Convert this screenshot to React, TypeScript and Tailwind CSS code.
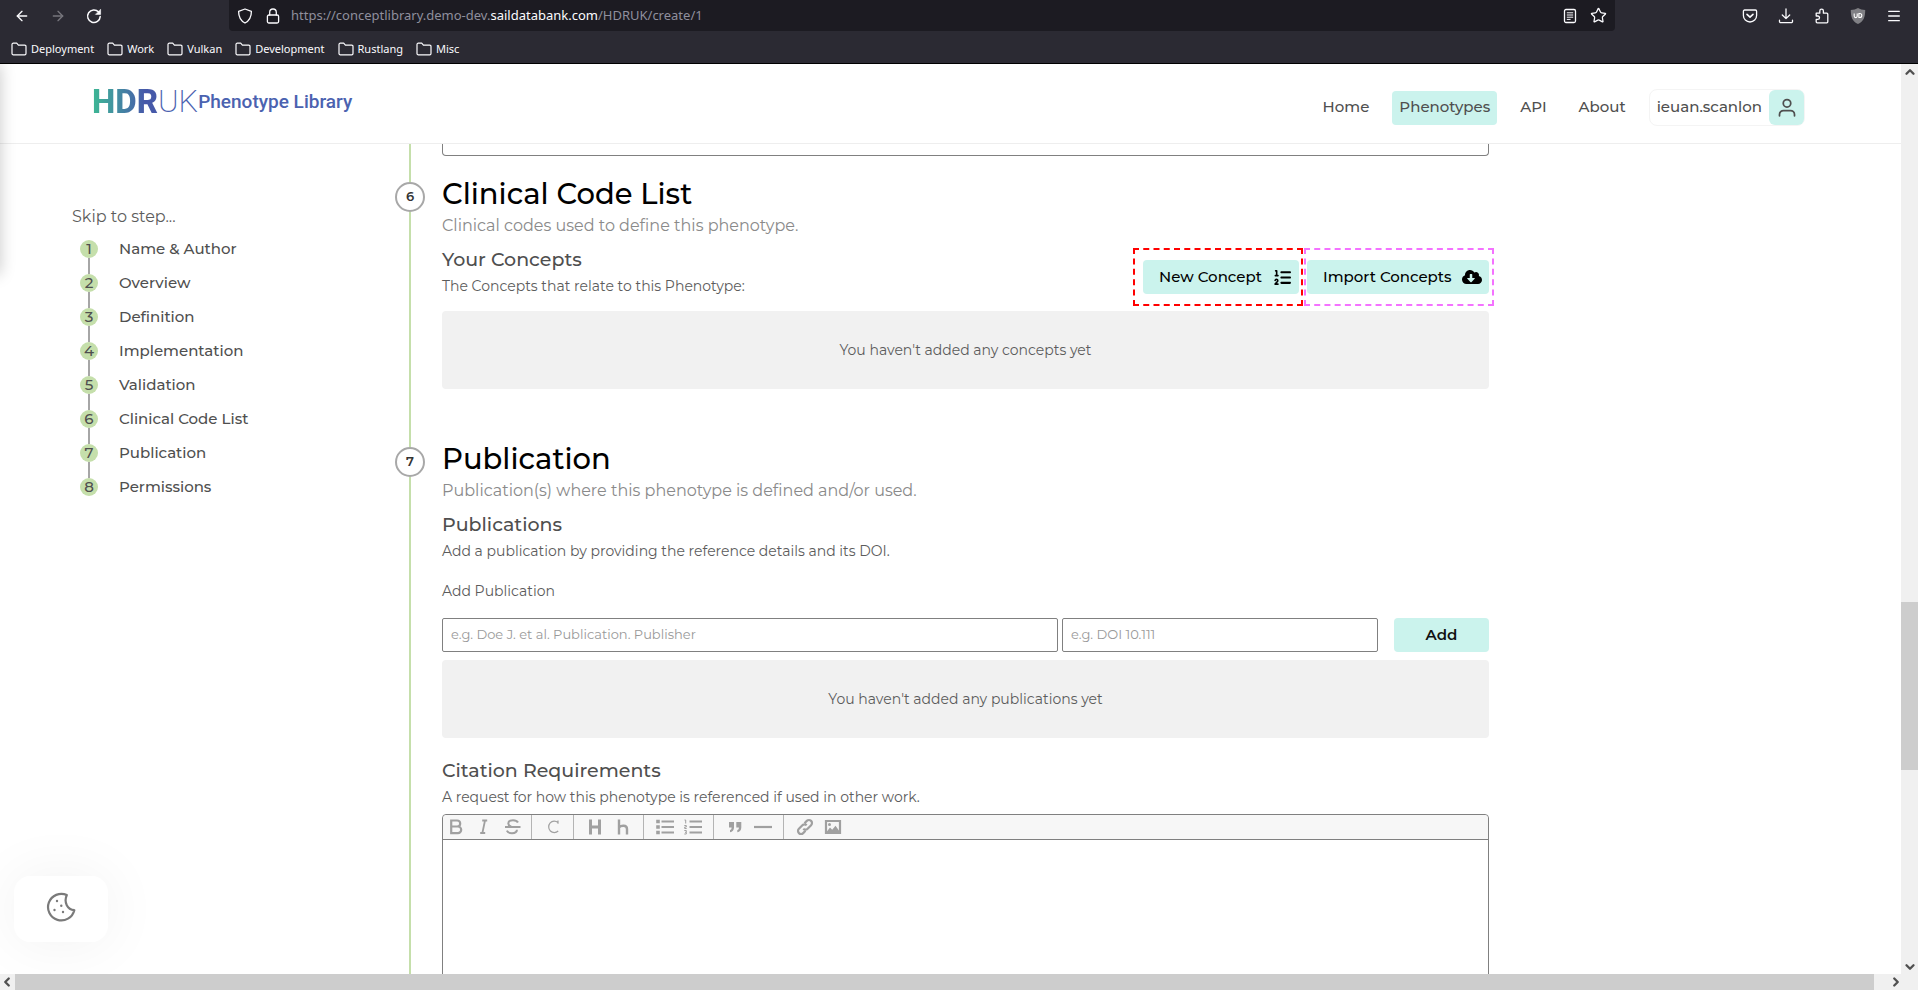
import React from "react";
import {
  ArrowLeft,
  ArrowRight,
  ChevronDown,
  ChevronLeft,
  ChevronRight,
  ChevronUp,
  Menu,
  Star,
} from "lucide-react";
import { FaListOl } from "react-icons/fa6";
import { FaCloudDownloadAlt } from "react-icons/fa";

const bookmarks = ["Deployment", "Work", "Vulkan", "Development", "Rustlang", "Misc"];

const steps = [
  "Name & Author",
  "Overview",
  "Definition",
  "Implementation",
  "Validation",
  "Clinical Code List",
  "Publication",
  "Permissions",
];

type IconProps = { children: React.ReactNode; size?: number; width?: number };

function Glyph({ children, size = 16, width = 1.3 }: IconProps) {
  return (
    <svg
      width={size}
      height={size}
      viewBox="0 0 16 16"
      fill="none"
      stroke="currentColor"
      strokeWidth={width}
      strokeLinecap="round"
      strokeLinejoin="round"
      aria-hidden="true"
    >
      {children}
    </svg>
  );
}

function BrowserChrome() {
  return (
    <div className="shrink-0 border-b border-black bg-[#2b2a33] font-['Noto_Sans',sans-serif] text-[#fbfbfe]">
      <div className="flex h-[31px] items-center">
        <div className="flex w-[229px] shrink-0 items-center gap-5 pl-[14px]">
          <button aria-label="Back"><ArrowLeft size={16} strokeWidth={2} /></button>
          <button aria-label="Forward" className="text-[#77767d]"><ArrowRight size={16} strokeWidth={2} /></button>
          <button aria-label="Reload">
            <Glyph width={1.5}>
              <path d="M14.2 8.6A6.3 6.3 0 1 1 12.6 4" />
              <path d="M14.6 1.6v4.8H9.8z" fill="currentColor" strokeWidth={0.6} />
            </Glyph>
          </button>
        </div>
        <div className="flex h-[31px] min-w-0 flex-1 items-center rounded-b bg-[#1c1b22] pr-2 pl-2">
          <Glyph>
            <path d="M8 1 14.4 3.4c0 5-1.600 9-6.400 11.600C3.200 12.400 1.600 8.400 1.600 3.400z" />
          </Glyph>
          <span className="ml-3">
            <Glyph>
              <rect x="2.400" y="7" width="11.200" height="8" rx="1.500" />
              <path d="M4.700 7V4.300a3.300 3.300 0 0 1 6.600 0V7" />
            </Glyph>
          </span>
          <span className="ml-[10px] flex-1 truncate text-[13px] text-[#8f8f9d]">
            https://conceptlibrary.demo-dev.<span className="text-[#fbfbfe]">saildatabank.com</span>/HDRUK/create/1
          </span>
          <button aria-label="Reader view" className="mr-3">
            <Glyph>
              <rect x="2.500" y="1.500" width="11" height="13" rx="1.500" />
              <path d="M5.200 4.800h5.600M5.200 7h5.600M5.200 9.200h5.600M5.200 11.400h3" strokeWidth={1} />
            </Glyph>
          </button>
          <button aria-label="Bookmark this page"><Star size={17} strokeWidth={1.800} /></button>
        </div>
        <div className="flex w-[303px] shrink-0 items-center justify-end gap-5 pr-4">
          <button aria-label="Save to Pocket">
            <Glyph>
              <path d="M2.600 2h10.800a1.200 1.200 0 0 1 1.200 1.200V7.400a6.600 6.600 0 0 1-13.200 0V3.200A1.200 1.200 0 0 1 2.600 2z" />
              <path d="m5 6.400 3 2.800 3-2.800" strokeWidth={1.600} />
            </Glyph>
          </button>
          <button aria-label="Downloads">
            <Glyph>
              <path d="M8 1v9.500M4.300 7 8 10.600 11.700 7M1.500 12.200v1.300a1.200 1.200 0 0 0 1.200 1.200h10.600a1.200 1.200 0 0 0 1.200-1.200v-1.300" />
            </Glyph>
          </button>
          <button aria-label="Extensions">
            <Glyph>
              <path d="M2.200 5.200h3.600V3a1.800 1.800 0 0 1 3.600 0v2.200h3.400a1 1 0 0 1 1 1v7.600a1 1 0 0 1-1 1H3.200a1 1 0 0 1-1-1v-2.400h1.600a1.700 1.700 0 0 0 0-3.400H2.200z" />
            </Glyph>
          </button>
          <button aria-label="Blocker">
            <svg width="16" height="16" viewBox="0 0 16 16" aria-hidden="true">
              <path d="M8 0c2 1.300 4.500 1.900 7.200 1.900C15.200 9 13.700 13.200 8 16 2.300 13.200.8 9 .8 1.900 3.500 1.900 6 1.300 8 0z" fill="#808085" />
              <path d="M4.200 5.500v2.600a1.500 1.500 0 0 0 3 0V5.500M8.900 5.500v4h.9a2 2 0 0 0 0-4z" fill="none" stroke="#fff" strokeWidth="1.100" />
            </svg>
          </button>
          <button aria-label="Menu"><Menu size={16} strokeWidth={1.900} /></button>
        </div>
      </div>
      <div className="flex h-8 items-center gap-[13px] pt-1 pl-[11px] text-[11px]">
        {bookmarks.map((name) => (
          <a key={name} href="#" className="flex items-center gap-1">
            <Glyph width={1.200}>
              <path d="M1 12.500v-9A1.300 1.300 0 0 1 2.300 2.200h3.400l1.700 1.900h6.300A1.300 1.300 0 0 1 15 5.400v7.100a1.300 1.300 0 0 1-1.300 1.300H2.300A1.300 1.300 0 0 1 1 12.500z" />
            </Glyph>
            {name}
          </a>
        ))}
      </div>
    </div>
  );
}

function SiteHeader() {
  return (
    <header className="flex h-20 shrink-0 items-center justify-between border-b border-[#eeeeee] bg-white pr-24 pl-[92px]">
      <a href="#" className="mb-1 flex items-center font-[Roboto,sans-serif] text-[#4b62b0]">
        <span className="bg-linear-to-r from-[#3cb893] to-[#4659a9] to-80% bg-clip-text text-[33px] leading-8 font-extrabold text-transparent">
          HDR
        </span>
        <span className="text-[31px] leading-8 font-extralight">UK</span>
        <span className="text-[19px] leading-8 font-medium">Phenotype Library</span>
      </a>
      <nav className="mt-2 flex items-center gap-[7px] text-[15px] font-medium text-[#4f4f4f]">
        <a href="#" className="px-4 py-1">Home</a>
        <a href="#" className="flex h-[34px] items-center rounded bg-[#cbf3ed] px-[7px]">Phenotypes</a>
        <div className="flex">
          <a href="#" className="px-4 py-1">API</a>
          <a href="#" className="px-4 py-1">About</a>
        </div>
        <a href="#" className="flex items-center rounded-lg border border-[#f4f4f4] pl-[7px]">
          <span className="pr-[7px]">ieuan.scanlon</span>
          <span className="flex size-[35px] items-center justify-center rounded-md bg-[#cbf3ed]">
            <Glyph size={20} width={1.400}>
              <circle cx="8" cy="4.200" r="3" />
              <path d="M2 14.200v-1a3.200 3.200 0 0 1 3.200-3.200h5.600a3.200 3.200 0 0 1 3.200 3.200v1" />
            </Glyph>
          </span>
        </a>
      </nav>
    </header>
  );
}

function StepNav() {
  return (
    <nav className="w-[395px] shrink-0 pt-[61px] pl-[72px] text-[#4f4f4f]">
      <p className="text-base leading-6 font-normal text-[#5c5c5c]">Skip to step...</p>
      <ol className="mt-[11px]">
        {steps.map((name, i) => (
          <li key={name} className="flex gap-[21px] pl-2">
            <div className="flex w-[18px] flex-col items-center">
              <span className="flex size-[18px] items-center justify-center rounded-full bg-[#c5dfab] text-[15px] font-medium">
                {i + 1}
              </span>
              {i < steps.length - 1 && <span className="h-4 w-[2px] bg-[#a6a6a6]" />}
            </div>
            <a href="#" className="text-[15px] leading-[18px] font-medium">{name}</a>
          </li>
        ))}
      </ol>
    </nav>
  );
}

function Section({ step, title, lead, children }: { step: number; title: string; lead: string; children: React.ReactNode }) {
  return (
    <section className="flex gap-[17px]">
      <div className="flex w-[30px] shrink-0 flex-col items-center">
        <span className="h-2 w-[2px] bg-[#c5dfab]" />
        <span className="flex size-[30px] shrink-0 items-center justify-center rounded-full border-2 border-[#a8a8a8] text-[13px] font-semibold text-[#333]">
          {step}
        </span>
        <span className="w-[2px] flex-1 bg-[#c5dfab]" />
      </div>
      <div className="min-w-0 flex-1 pt-[3px]">
        <h1 className="text-[29px] leading-[34px] font-medium text-black">{title}</h1>
        <p className="mt-[3px] mb-[10px] text-base leading-6 font-normal text-[#8a8a8a]">{lead}</p>
        {children}
      </div>
    </section>
  );
}

function FieldTitle({ title, hint }: { title: string; hint: string }) {
  return (
    <div>
      <h2 className="text-[19px] leading-6 font-medium text-[#4f4f4f]">{title}</h2>
      <p className="mt-1 text-sm leading-5 font-normal text-[#5c5c5c]">{hint}</p>
    </div>
  );
}

function EmptyBox({ text }: { text: string }) {
  return (
    <div className="flex h-[78px] items-center justify-center rounded-sm bg-[#f1f1f1] text-sm font-normal text-[#5c5c5c]">
      {text}
    </div>
  );
}

function Tool({ label, children }: { label: string; children: React.ReactNode }) {
  return (
    <button aria-label={label} className="flex h-6 w-7 items-center justify-center">
      <svg width="18" height="18" viewBox="0 0 18 18" fill="none" stroke="currentColor" strokeWidth="2.200" aria-hidden="true">
        {children}
      </svg>
    </button>
  );
}

function ToolGroup({ children }: { children: React.ReactNode }) {
  return <div className="flex border-r border-[#b4b4b4] pr-[6px] pl-[7px] first:pr-1 first:pl-0 last:border-r-0">{children}</div>;
}

function Editor() {
  return (
    <div className="mt-[7px] rounded-t border border-[#808080]">
      <div className="flex h-[25px] rounded-t border-b border-[#808080] bg-[#f7f7f7] text-[#a0a0a0]">
        <ToolGroup>
          <Tool label="Bold"><path d="M3.200 2.500h6a3 3 0 0 1 0 6h-6zM3.200 8.500h6.700a3.300 3.300 0 0 1 0 6.600H3.200z" /></Tool>
          <Tool label="Italic"><path d="M6.200 2.500h5M4.200 15h5M9 2.500 6.400 15" strokeWidth="1.800" /></Tool>
          <Tool label="Strikethrough">
            <path d="M14 4.500C13 2.800 11 2.200 9 2.200 6 2.200 4.300 3.600 4.300 5.500c0 1.500 1 2.500 3 3.200M2.800 12.600c1 1.900 3 2.600 5.200 2.600 3 0 4.900-1.400 4.900-3.400M1 9h15.500" strokeWidth="2" />
          </Tool>
        </ToolGroup>
        <ToolGroup>
          <Tool label="Code"><path d="M14 4.500A5.600 5.800 0 1 0 14.200 13M14 2.500v3.200" strokeWidth="1.200" /></Tool>
        </ToolGroup>
        <ToolGroup>
          <Tool label="Heading 1"><path d="M4.500 1.500v15M13.500 1.500v15M4.500 9h9" strokeWidth="3" /></Tool>
          <Tool label="Heading 2"><path d="M5 1.500v15M5 9.500c1.500-2 8-3 8 1.500v5.500" strokeWidth="2.400" /></Tool>
        </ToolGroup>
        <ToolGroup>
          <Tool label="Bulleted list">
            <path d="M5.500 3.500H18M5.500 9H18M5.500 14.500H18" />
            <path d="M.2 3.500h3.600M.2 9h3.600M.2 14.500h3.600" strokeWidth="3.400" />
          </Tool>
          <Tool label="Numbered list">
            <path d="M5.500 3.500H18M5.500 9H18M5.500 14.500H18" />
            <path d="M.5 2h1.200v3.500M.3 7.500h2v1.500h-1.600v1.500h2M.3 12.500h2v1.800H1M2.300 14.300v1.700h-2" strokeWidth="1" />
          </Tool>
        </ToolGroup>
        <ToolGroup>
          <Tool label="Quote">
            <path d="M3 4h5v5.500C8 12 6.500 14 4 14.300v-2.200C5.200 11.800 5.600 11 5.600 9.500H3zM10.300 4h5v5.500c0 2.500-1.500 4.500-4 4.800v-2.200c1.200-.3 1.600-1.100 1.600-2.600h-2.600z" fill="currentColor" stroke="none" />
          </Tool>
          <Tool label="Rule"><path d="M0 9h18" /></Tool>
        </ToolGroup>
        <ToolGroup>
          <Tool label="Link">
            <path d="m7.300 10.700a3 3 0 0 0 4.300 0l3.500-3.500a3 3 0 0 0-4.300-4.300L8.500 5.200M10.700 7.300a3 3 0 0 0-4.300 0l-3.500 3.500a3 3 0 0 0 4.300 4.300l2.300-2.300" />
          </Tool>
          <Tool label="Image">
            <path d="M2 3h14v12H2z" />
            <path d="m2.500 14 3.500-4.500 2.200 2.200 3.300-4 4.500 6.300z" fill="currentColor" stroke="none" />
            <circle cx="5.500" cy="6.500" r="1.500" fill="currentColor" stroke="none" />
          </Tool>
        </ToolGroup>
      </div>
      <textarea aria-label="Citation requirements" className="block h-[400px] w-full resize-none outline-none" />
    </div>
  );
}

function PhenotypeForm() {
  return (
    <main className="max-w-[1094px] min-w-0 flex-1">
      <div className="flex gap-[17px]">
        <div className="flex w-[30px] shrink-0 justify-center">
          <span className="w-[2px] bg-[#c5dfab]" />
        </div>
        <div className="flex-1 pb-[18px]">
          <div className="h-3 rounded-b border border-t-0 border-[#808080]" />
        </div>
      </div>

      <Section step={6} title="Clinical Code List" lead="Clinical codes used to define this phenotype.">
        <div className="flex items-end justify-between">
          <div className="pb-[15px]">
            <FieldTitle title="Your Concepts" hint="The Concepts that relate to this Phenotype:" />
          </div>
          <div className="mb-[17px] flex gap-2 text-[15px] font-medium text-black">
            <div className="relative">
              <button className="flex h-[34px] w-[156px] items-center justify-between rounded bg-[#cbf3ed] pr-2 pl-4">
                New Concept <FaListOl size={17} />
              </button>
              <span className="pointer-events-none absolute -top-3 -right-1 -bottom-3 -left-[10px] border-2 border-dashed border-[#ff0000]" />
            </div>
            <div className="relative">
              <button className="flex h-[34px] w-[182px] items-center justify-between rounded bg-[#cbf3ed] pr-[7px] pl-4">
                Import Concepts <FaCloudDownloadAlt size={20} />
              </button>
              <span className="pointer-events-none absolute -top-3 -right-[5px] -bottom-3 -left-[3px] border-2 border-dashed border-[#f472ff]" />
            </div>
          </div>
        </div>
        <div className="pb-[50px]">
          <EmptyBox text="You haven't added any concepts yet" />
        </div>
      </Section>

      <Section step={7} title="Publication" lead="Publication(s) where this phenotype is defined and/or used.">
        <FieldTitle title="Publications" hint="Add a publication by providing the reference details and its DOI." />
        <label htmlFor="publication" className="mt-5 block text-sm leading-5 font-normal text-[#5c5c5c]">
          Add Publication
        </label>
        <div className="mt-[17px] mb-2 flex h-[34px] text-[13px]">
          <input
            id="publication"
            placeholder="e.g. Doe J. et al. Publication. Publisher"
            className="min-w-0 flex-[598] rounded-xs border border-[#808080] px-2 font-normal placeholder:text-[#999]"
          />
          <input
            aria-label="DOI"
            placeholder="e.g. DOI 10.111"
            className="ml-1 min-w-0 flex-[298] rounded-xs border border-[#808080] px-2 font-normal placeholder:text-[#999]"
          />
          <button className="ml-4 w-[95px] rounded bg-[#cbf3ed] text-[15px] font-semibold text-[#111]">Add</button>
        </div>
        <EmptyBox text="You haven't added any publications yet" />
        <div className="mt-[21px]">
          <FieldTitle title="Citation Requirements" hint="A request for how this phenotype is referenced if used in other work." />
        </div>
        <Editor />
      </Section>
    </main>
  );
}

function CookieButton() {
  return (
    <button
      aria-label="Cookie settings"
      className="absolute bottom-8 left-[14px] flex h-[66px] w-[94px] items-center justify-center rounded-2xl bg-white pb-1 text-[#7a7a7a] shadow-[0_0_60px_rgba(0,0,0,0.06)]"
    >
      <svg width="30" height="30" viewBox="0 0 30 30" fill="none" stroke="currentColor" strokeWidth="2.200" strokeLinejoin="round" aria-hidden="true">
        <path d="M20.800 3A13.300 13.300 0 1 0 28.300 18.200C21.500 17.500 17.500 10.500 20.800 3z" />
        <g fill="currentColor" stroke="none">
          <circle cx="11" cy="9" r="1.200" />
          <circle cx="15.300" cy="13.800" r="1.200" />
          <circle cx="8.500" cy="18" r="1.200" />
          <circle cx="17" cy="20" r="1.200" />
        </g>
      </svg>
    </button>
  );
}

export default function App() {
  return (
    <div className="flex h-screen flex-col overflow-hidden bg-white font-[Montserrat,Inter,sans-serif]">
      <BrowserChrome />
      <div className="flex min-h-0 flex-1">
        <div className="relative flex min-w-0 flex-1 flex-col overflow-hidden">
          <SiteHeader />
          <div className="flex min-h-0 flex-1 overflow-hidden">
            <StepNav />
            <PhenotypeForm />
          </div>
          <div className="absolute top-0 -left-4 h-[210px] w-4 shadow-[0_0_16px_rgba(0,0,0,0.22)]" />
          <CookieButton />
        </div>
        <div className="flex w-[17px] shrink-0 flex-col items-center bg-[#f0f0f0] text-[#505050]">
          <ChevronUp size={14} strokeWidth={4} className="mt-px shrink-0" />
          <div className="flex-[522]" />
          <div className="w-full flex-[168] bg-[#cdcdcd]" />
          <div className="flex-[190]" />
          <ChevronDown size={14} strokeWidth={4} className="shrink-0" />
        </div>
      </div>
      <div className="flex h-4 shrink-0 items-center bg-[#f0f0f0] text-[#505050]">
        <ChevronLeft size={14} strokeWidth={4} className="shrink-0" />
        <div className="ml-px h-full flex-1 bg-[#cdcdcd]" />
        <div className="flex w-11 justify-center">
          <ChevronRight size={14} strokeWidth={4} />
        </div>
      </div>
    </div>
  );
}
